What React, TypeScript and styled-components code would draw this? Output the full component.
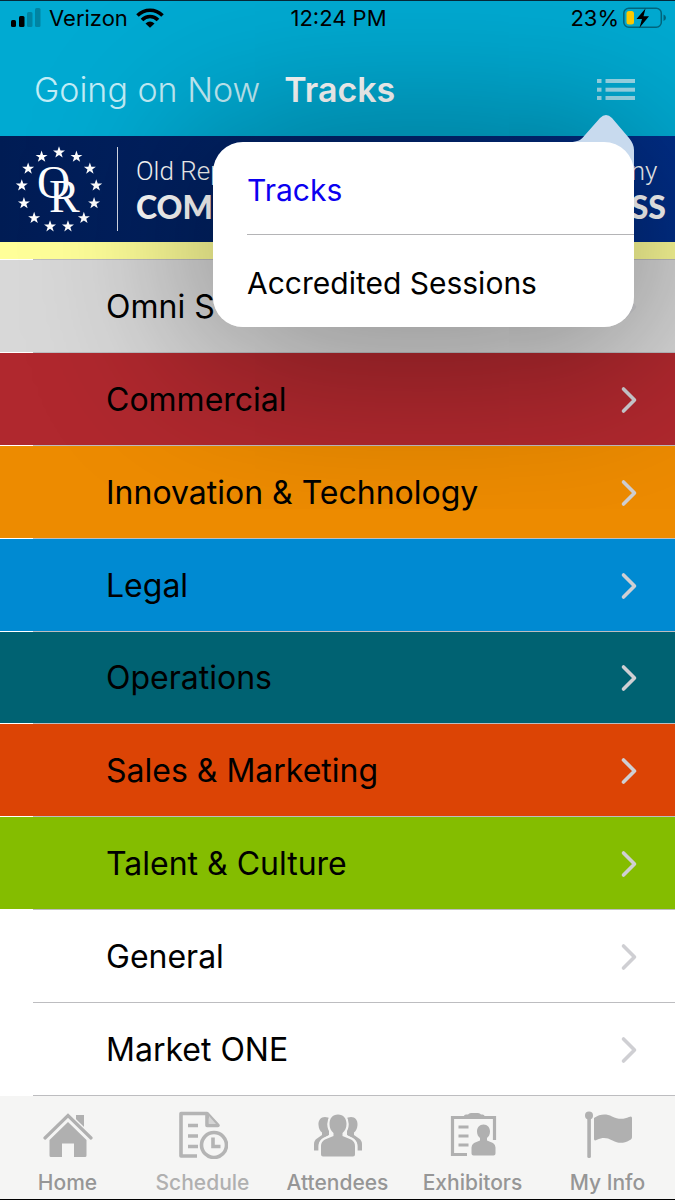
import React from "react";
import styled, { createGlobalStyle } from "styled-components";

const GlobalStyle = createGlobalStyle`
  *, *::before, *::after { box-sizing: border-box; }
  body { margin: 0; background: #fff; font-family: Inter, "Liberation Sans", sans-serif; color: #000; }
  button { font: inherit; border: 0; background: none; padding: 0; cursor: pointer; }
  a { color: inherit; text-decoration: none; }
`;

const Screen = styled.div`
  position: relative;
  display: flex;
  flex-direction: column;
  min-height: 100vh;
  overflow: hidden;
  border-bottom: 1px solid #000;
`;

const TopBar = styled.header`
  background: #00aad2;
  border-top: 1px solid #06293a;
`;

const StatusBar = styled.div`
  display: grid;
  grid-template-columns: 1fr auto 1fr;
  align-items: center;
  height: 34px;
  padding: 0 9px 0 11px;
  font-size: 22px;
  font-weight: 400;
  line-height: 24px;
`;

const StatusGroup = styled.div<{ $end?: boolean }>`
  display: flex;
  align-items: center;
  gap: ${(p) => (p.$end ? 4 : 8)}px;
  justify-content: ${(p) => (p.$end ? "flex-end" : "flex-start")};
`;

const TitleBar = styled.div`
  display: flex;
  align-items: center;
  height: 101px;
  padding: 8px 40px 0 34px;
`;

const TitleTab = styled.button<{ $active?: boolean }>`
  margin-right: 24px;
  font-size: 34px;
  line-height: 40px;
  font-weight: ${(p) => (p.$active ? 600 : 300)};
  color: ${(p) => (p.$active ? "#fff" : "#c2edf7")};
`;

const ListButton = styled.button`
  display: flex;
  margin-left: auto;
`;

const Banner = styled.section`
  display: flex;
  align-items: center;
  height: 106px;
  padding: 0 9px 0 14px;
  background: linear-gradient(90deg, #001c54, #002e88);
  color: #fff;
`;

const BannerRule = styled.div`
  width: 1px;
  height: 84px;
  margin: 0 18px 0 13px;
  background: #d5dbe8;
`;

const BannerText = styled.div<{ $end?: boolean }>`
  display: flex;
  flex-direction: column;
  margin-left: ${(p) => (p.$end ? "auto" : "0")};
`;

const BannerLine = styled.span`
  font-family: Roboto, sans-serif;
  font-size: 26px;
  font-weight: 300;
  line-height: 36px;
`;

const BannerStrong = styled.strong`
  font-family: Lato, sans-serif;
  font-size: 32px;
  font-weight: 900;
  line-height: 36px;
`;

const Highlight = styled.div`
  height: 17px;
  background: #ffff99;
`;

const Divider = styled.div`
  flex: none;
  height: 1px;
  background: linear-gradient(90deg, #fff 33px, #bdbdc0 33px);
`;

const TrackList = styled.ul`
  flex: 1;
  display: grid;
  grid-auto-rows: 1fr;
  margin: 0;
  padding: 0;
  list-style: none;
`;

const TrackItem = styled.li<{ $color: string }>`
  display: flex;
  flex-direction: column;
  min-height: 92px;
  background: ${(p) => p.$color};
`;

const TrackLink = styled.a`
  flex: 1;
  display: flex;
  align-items: center;
  justify-content: space-between;
  padding: 2px 37px 0 106px;
  font-size: 32px;
  line-height: 40px;
`;

const TabBar = styled.nav`
  display: grid;
  grid-template-columns: repeat(5, 1fr);
  height: 103px;
  background: #f5f5f4;
`;

const TabLink = styled.a<{ $dim?: boolean }>`
  display: flex;
  flex-direction: column;
  align-items: center;
  gap: 12px;
  padding-top: 15px;
  font-size: 21px;
  line-height: 24px;
  font-weight: 500;
  color: ${(p) => (p.$dim ? "#b0b0b0" : "#969696")};
`;

const Popover = styled.div`
  position: absolute;
  top: 142px;
  right: 41px;
  width: 421px;
  border-radius: 30px;
  box-shadow: 0 10px 170px 16px rgba(0, 0, 0, 0.4);
`;

const PopoverArrow = styled.svg`
  position: absolute;
  right: 0;
  top: -27px;
`;

const Menu = styled.div`
  position: relative;
  overflow: hidden;
  border-radius: 30px;
  background: #fff;
`;

const MenuItem = styled.button<{ $selected?: boolean }>`
  display: block;
  width: 100%;
  height: 92px;
  padding: 4px 0 0 34px;
  text-align: left;
  font-size: 30px;
  line-height: 40px;
  color: ${(p) => (p.$selected ? "#0b00f0" : "#000")};
`;

const MenuDivider = styled.div`
  height: 1px;
  margin-left: 34px;
  background: #b4b4b6;
`;

const Signal = () => (
  <svg width="30" height="20" viewBox="0 0 30 20" aria-hidden="true">
    <rect x="0" y="12" width="5" height="7" rx="1.5" />
    <rect x="8" y="8" width="5.5" height="11" rx="1.5" />
    <g opacity=".22">
      <rect x="16" y="4" width="5.5" height="15" rx="1.5" />
      <rect x="24" y="0" width="5.5" height="19" rx="1.5" />
    </g>
  </svg>
);

const Wifi = () => (
  <svg width="28" height="20" viewBox="0 0 28 20" fill="none" stroke="#000" strokeWidth="3.6" aria-hidden="true">
    <path d="M1.5 7.5C8.5.5 19.5.5 26.5 7.5" />
    <path d="M6 12C10.5 7.3 17.5 7.3 22 12" />
    <path d="M9.5 15.5Q14 11.5 18.5 15.5L14 19.8Z" fill="#000" stroke="none" />
  </svg>
);

const Battery = () => (
  <svg width="43" height="22" viewBox="0 0 43 22" aria-hidden="true">
    <rect x=".8" y="1.3" width="37.5" height="19" rx="5" fill="none" stroke="#000" strokeOpacity=".4" strokeWidth="1.5" />
    <path d="M40.500 7.500q2.500 1 2.500 3.300t-2.500 3.300z" opacity=".4" />
    <rect x="3.5" y="4" width="7.5" height="13.5" rx="2.5" fill="#ffcc00" />
    <path d="M22.500 1.500L13.500 12h5.500l-2.500 8.800L26 9.300h-5.500z" />
  </svg>
);

const ListIcon = () => (
  <svg width="38" height="22" viewBox="0 0 38 22" fill="#9bdaea" aria-hidden="true">
    {[0, 8.7, 17].map((y) => (
      <g key={y}>
        <rect x="0" y={y} width="4.5" height="4" />
        <rect x="8.5" y={y} width="29.5" height="4" />
      </g>
    ))}
  </svg>
);

const Chevron = () => (
  <svg width="18" height="28" viewBox="0 0 18 28" fill="none" stroke="#cfcfd3" strokeWidth="3.6" strokeLinecap="round" strokeLinejoin="round" aria-hidden="true">
    <path d="M3.500 3L14.500 14L3.500 25" />
  </svg>
);

const STAR = "M0-6.200L1.500-1.900L6-1.900L2.400.8L3.700 5L0 2.400L-3.700 5L-2.400.8L-6-1.900L-1.500-1.900Z";

const Crest = () => (
  <svg width="90" height="90" viewBox="0 0 90 90" fill="#fff" role="img" aria-label="OR">
    {Array.from({ length: 13 }, (_, i) => {
      const a = (i * 2 * Math.PI) / 13;
      return <path key={i} d={STAR} transform={`translate(${45 + 37.5 * Math.sin(a)} ${46 - 37.5 * Math.cos(a)})`} />;
    })}
    <g fontFamily="Liberation Serif, serif">
      <text x="23" y="54" fontSize="46">O</text>
      <text x="35" y="68" fontSize="46">R</text>
    </g>
  </svg>
);

const HomeIcon = () => (
  <svg width="50" height="48" viewBox="0 0 50 48" fill="#b0b0b0" aria-hidden="true">
    <path d="M33 4h8v17L33 13z" />
    <path d="M2 27L25 4.500L48 27" fill="none" stroke="#f5f5f4" strokeWidth="6" />
    <path d="M2 27L25 4.500L48 27" fill="none" stroke="#b0b0b0" strokeWidth="3.2" strokeLinecap="round" />
    <path d="M25 11L43.500 29V44.500q0 1.500-1.500 1.500H31V32.500H19V46H8q-1.500 0-1.500-1.500V29z" />
  </svg>
);

const ScheduleIcon = () => (
  <svg width="50" height="48" viewBox="0 0 50 48" fill="none" stroke="#b4b4b4" strokeWidth="3.6" aria-hidden="true">
    <path d="M19 45H3V2.500H29L40 14.500H29V2.500" strokeLinejoin="round" />
    <path d="M31 5L38 13H31z" fill="#d5d5d5" stroke="none" />
    <path d="M10 14.500h10M10 25h10M10 35.500h10" />
    <circle cx="36" cy="34" r="12.5" />
    <path d="M35 26.500V35.500H42.500" />
  </svg>
);

const AttendeesIcon = () => (
  <svg width="50" height="48" viewBox="0 0 50 48" fill="#b0b0b0" aria-hidden="true">
    <path d="M15 6.500C9 4.500 5 8.500 5.500 14c.2 3.500 1.500 6 3.500 7.500V24L4 27.500Q1 29.500 1 33v6.500h4.500V35q0-5 4.500-7.500L16 24V7z" />
    <path d="M35 6.500C41 4.500 45 8.500 44.500 14c-.2 3.500-1.500 6-3.500 7.500V24l5 3.500q3 2 3 5.500v6.500h-4.500V35q0-5-4.500-7.500L34 24V7z" />
    <path
      d="M25 3.500c-5.500 0-8.500 4-8.500 9.500 0 4 1.500 7 4 9v3L12 28.500Q8 30.500 8 35v8.500q0 2 2 2h30q2 0 2-2V35q0-4.500-4-6.500L29.500 25v-3c2.500-2 4-5 4-9 0-5.500-3-9.500-8.500-9.500z"
      stroke="#f5f5f4"
      strokeWidth="4.5"
      paintOrder="stroke"
    />
  </svg>
);

const ExhibitorsIcon = () => (
  <svg width="50" height="48" viewBox="0 0 50 48" fill="#b0b0b0" aria-hidden="true">
    <path d="M19 43.500H4.500V6.500H46.500V29" fill="none" stroke="#b0b0b0" strokeWidth="3.2" />
    <path d="M16 8V5q0-1.500 2-1.500h2Q21 2 23 2h7q2 0 3 1.500h1.500q2 0 2 1.500v3z" />
    <path d="M10.500 16h10M10.500 25h10M10.500 34h10" stroke="#b0b0b0" strokeWidth="3.2" />
    <path d="M35.500 13.500c-4 0-6.500 3-6.500 7 0 3 1.300 5.200 3 6.500v2.500l-6 2.500q-2.500 1.500-2.500 4.500v6q0 2 2 2H45.500q2 0 2-2v-6q0-3-2.500-4.500l-6-2.500V27c1.700-1.300 3-3.500 3-6.500 0-4-2.500-7-6.500-7z" />
  </svg>
);

const FlagIcon = () => (
  <svg width="50" height="48" viewBox="0 0 50 48" fill="#b0b0b0" aria-hidden="true">
    <circle cx="6" cy="4.500" r="4" />
    <rect x="4.300" y="6" width="3.600" height="41" rx="1.500" />
    <path d="M11 7c6-4 12-4.500 18-1.500s12 3 17 .5q3-1.500 3 1v19c0 2-1 2.500-2.500 3.200-6 3.500-11 3.500-17 .3s-10-3.200-15.500-.7Q11 30.500 11 28z" />
  </svg>
);

const tracks = [
  { name: "Omni S", color: "#d8d8d8" },
  { name: "Commercial", color: "#b0282e" },
  { name: "Innovation & Technology", color: "#ed8b00" },
  { name: "Legal", color: "#008ad2" },
  { name: "Operations", color: "#006272" },
  { name: "Sales & Marketing", color: "#dc4405" },
  { name: "Talent & Culture", color: "#84bd00" },
  { name: "General", color: "#fff" },
  { name: "Market ONE", color: "#fff" },
];

const tabs = [
  { name: "Home", Icon: HomeIcon },
  { name: "Schedule", Icon: ScheduleIcon, dim: true },
  { name: "Attendees", Icon: AttendeesIcon },
  { name: "Exhibitors", Icon: ExhibitorsIcon },
  { name: "My Info", Icon: FlagIcon },
];

export default function App() {
  return (
    <>
      <GlobalStyle />
      <Screen>
        <TopBar>
          <StatusBar>
            <StatusGroup>
              <Signal />
              <span>Verizon</span>
              <Wifi />
            </StatusGroup>
            <span>12:24 PM</span>
            <StatusGroup $end>
              <span>23%</span>
              <Battery />
            </StatusGroup>
          </StatusBar>
          <TitleBar>
            <TitleTab type="button">Going on Now</TitleTab>
            <TitleTab type="button" $active>Tracks</TitleTab>
            <ListButton type="button" aria-label="Choose list">
              <ListIcon />
            </ListButton>
          </TitleBar>
        </TopBar>
        <Banner>
          <Crest />
          <BannerRule />
          <BannerText>
            <BannerLine>Old Rep</BannerLine>
            <BannerStrong>COM</BannerStrong>
          </BannerText>
          <BannerText $end>
            <BannerLine>ny</BannerLine>
            <BannerStrong>SS</BannerStrong>
          </BannerText>
        </Banner>
        <Highlight />
        <Divider />
        <TrackList>
          {tracks.map((t) => (
            <TrackItem key={t.name} $color={t.color}>
              <TrackLink href="#">
                {t.name}
                <Chevron />
              </TrackLink>
              <Divider />
            </TrackItem>
          ))}
        </TrackList>
        <TabBar>
          {tabs.map(({ name, Icon, dim }) => (
            <TabLink key={name} href="#" $dim={dim}>
              <Icon />
              {name}
            </TabLink>
          ))}
        </TabBar>
        <Popover>
          <PopoverArrow width="64" height="70" viewBox="0 0 64 70" fill="#c8daee" aria-hidden="true">
            <path d="M0 27C8 27 11 25 15 20L30 3Q36-3 42 3L59 23Q64 29 64 35V60H0Z" />
          </PopoverArrow>
          <Menu>
            <MenuItem type="button" $selected>Tracks</MenuItem>
            <MenuDivider />
            <MenuItem type="button">Accredited Sessions</MenuItem>
          </Menu>
        </Popover>
      </Screen>
    </>
  );
}
